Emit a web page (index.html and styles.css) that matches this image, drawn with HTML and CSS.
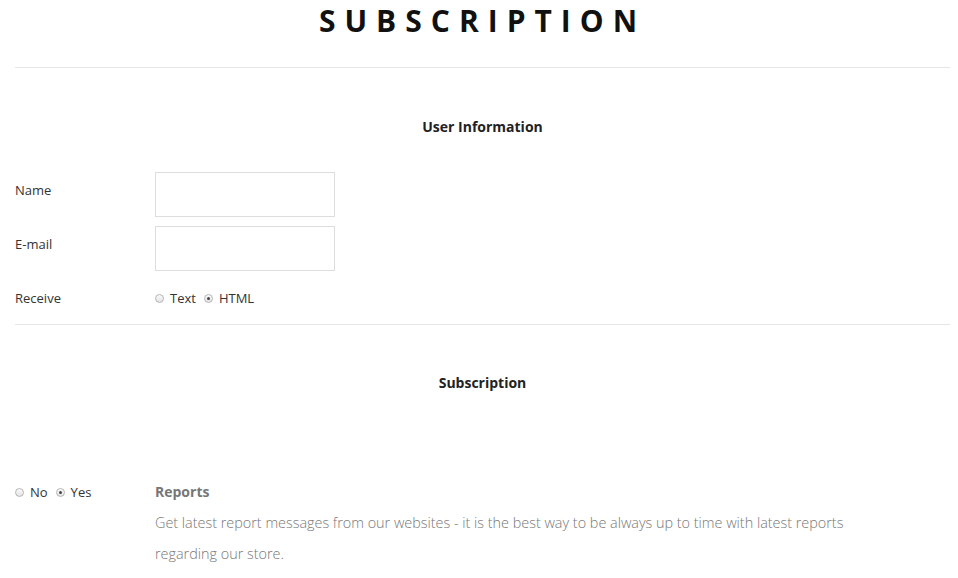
FILE: index.html
```html
<!DOCTYPE html>
<html lang="en">
<head>
  <meta charset="UTF-8" />
  <title>Subscription</title>
  <link rel="stylesheet" href="styles.css">
</head>
<body>
  <div class="page">
    <h1 class="title">SUBSCRIPTION</h1>

    <!-- USER INFORMATION -->
    <section class="block block-user">
      <h2 class="block-title">User Information</h2>
      <div class="form-row">
        <label class="form-label">Name</label>
        <input class="form-input" type="text">
      </div>
      <div class="form-row">
        <label class="form-label">E-mail</label>
        <input class="form-input" type="text">
      </div>
      <div class="form-row row-radio">
        <span class="form-label">Receive</span>
        <div class="radios">
          <label class="radio"><input type="radio" name="receive"> Text</label>
          <label class="radio"><input type="radio" name="receive" checked> HTML</label>
        </div>
      </div>
    </section>

    <!-- SUBSCRIPTION -->
    <section class="block block-subs">
      <h2 class="block-title">Subscription</h2>
      <div class="sub-item">
        <div class="radios sub-choice">
          <label class="radio"><input type="radio" name="reports"> No</label>
          <label class="radio"><input type="radio" name="reports" checked> Yes</label>
        </div>
        <div class="sub-info">
          <h3>Reports</h3>
          <p>Get latest report messages from our websites - it is the best way to be always up to time with latest reports regarding our store.</p>
        </div>
      </div>
    </section>
  </div>
</body>
</html>
```

FILE: styles.css
```css
*, *::before, *::after { box-sizing: border-box; margin: 0; padding: 0; }
body {
  font-family: 'Open Sans', sans-serif;
  color: #333;
  background: #fff;
  overflow: hidden;
}

.page {
  padding: 0 8px 0 15px;
}

/* TITLE */
.title {
  text-align: center;
  font-size: 30px;
  font-weight: 700;
  letter-spacing: 0.3em;
  line-height: 42px;
  color: #111;
  padding-bottom: 25px;
  border-bottom: 1px solid #e6e6e6;
}

.block-title {
  text-align: center;
  font-size: 14px;
  font-weight: 700;
  color: #222;
  line-height: 20px;
}

/* USER INFORMATION */
.block-user {
  padding: 49px 0 17px;
  border-bottom: 1px solid #e6e6e6;
}
.block-user .block-title { margin-bottom: 35px; }

.form-row {
  display: flex;
  align-items: flex-start;
  margin-bottom: 9px;
}
.form-label {
  width: 140px;
  font-size: 13px;
  line-height: 18px;
  padding-top: 9px;
}
.form-input {
  width: 180px;
  height: 45px;
  border: 1px solid #ddd;
  background: #fff;
  outline: none;
}
.row-radio { margin-top: 18px; margin-bottom: 0; }
.row-radio .form-label { padding-top: 0; }

.radios {
  display: flex;
  gap: 8px;
  font-size: 13px;
  line-height: 18px;
}
.radio {
  display: flex;
  align-items: center;
  gap: 6px;
}
.radio input {
  appearance: none;
  width: 9px;
  height: 9px;
  border: 1px solid #b5b5b5;
  border-radius: 50%;
  background: linear-gradient(#fafafa, #e4e4e4);
  display: grid;
  place-items: center;
}
.radio input:checked::after {
  content: "";
  width: 3px;
  height: 3px;
  border-radius: 50%;
  background: #444;
}

/* SUBSCRIPTION */
.block-subs {
  padding-top: 48px;
}
.block-subs .block-title { margin-bottom: 89px; }

.sub-item {
  display: flex;
  align-items: flex-start;
}
.sub-choice {
  width: 140px;
  padding-top: 1px;
}
.sub-info h3 {
  font-size: 14px;
  font-weight: 700;
  color: #777;
  line-height: 20px;
  margin-bottom: 5px;
}
.sub-info p {
  font-size: 14.4px;
  font-weight: 300;
  color: #777;
  line-height: 31px;
  max-width: 700px;
}
```
